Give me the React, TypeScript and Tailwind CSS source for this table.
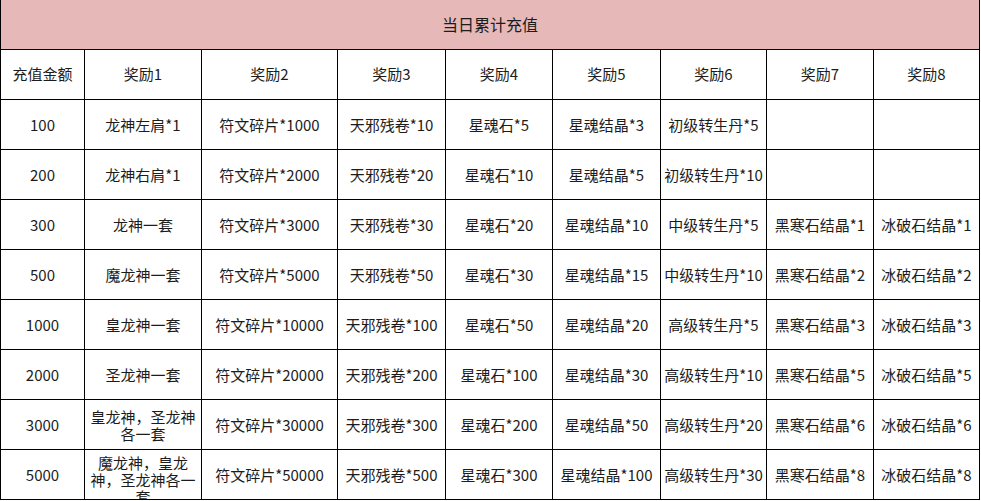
import React from "react";

const rows: (string | string[])[][] = [
  ["100", "龙神左肩*1", "符文碎片*1000", "天邪残卷*10", "星魂石*5", "星魂结晶*3", "初级转生丹*5", "", ""],
  ["200", "龙神右肩*1", "符文碎片*2000", "天邪残卷*20", "星魂石*10", "星魂结晶*5", "初级转生丹*10", "", ""],
  ["300", "龙神一套", "符文碎片*3000", "天邪残卷*30", "星魂石*20", "星魂结晶*10", "中级转生丹*5", "黑寒石结晶*1", "冰破石结晶*1"],
  ["500", "魔龙神一套", "符文碎片*5000", "天邪残卷*50", "星魂石*30", "星魂结晶*15", "中级转生丹*10", "黑寒石结晶*2", "冰破石结晶*2"],
  ["1000", "皇龙神一套", "符文碎片*10000", "天邪残卷*100", "星魂石*50", "星魂结晶*20", "高级转生丹*5", "黑寒石结晶*3", "冰破石结晶*3"],
  ["2000", "圣龙神一套", "符文碎片*20000", "天邪残卷*200", "星魂石*100", "星魂结晶*30", "高级转生丹*10", "黑寒石结晶*5", "冰破石结晶*5"],
  ["3000", ["皇龙神，圣龙神", "各一套"], "符文碎片*30000", "天邪残卷*300", "星魂石*200", "星魂结晶*50", "高级转生丹*20", "黑寒石结晶*6", "冰破石结晶*6"],
  ["5000", ["魔龙神，皇龙", "神，圣龙神各一", "套"], "符文碎片*50000", "天邪残卷*500", "星魂石*300", "星魂结晶*100", "高级转生丹*30", "黑寒石结晶*8", "冰破石结晶*8"],
];

const headers = ["充值金额", "奖励1", "奖励2", "奖励3", "奖励4", "奖励5", "奖励6", "奖励7", "奖励8"];

export default function App() {
  return (
    <div
      className="w-[981px] h-[501px] overflow-hidden bg-white text-[15px] text-[#1c1c1c]"
      style={{ fontFamily: '"Noto Sans CJK SC", "Noto Sans", sans-serif' }}
    >
      <div className="grid w-[980px] grid-cols-[83px_116px_135px_107px_106px_107px_105px_106px_105px] auto-rows-[49px] gap-px bg-black pl-px pr-px pb-px">
        <div className="col-span-9 flex items-center justify-center bg-[#e6b8b7] text-[16px] h-[50px] -mt-px">
          当日累计充值
        </div>
        {headers.map((h) => (
          <div key={h} className="flex items-center justify-center bg-white">
            {h}
          </div>
        ))}
        {rows.map((r, i) =>
          r.map((c, j) => (
            <div
              key={`${i}-${j}`}
              className="flex items-center justify-center overflow-hidden bg-white text-center whitespace-nowrap leading-[17px]"
            >
              {Array.isArray(c) ? (
                <div className={c.length > 2 ? "mt-[10px] flex flex-col" : "flex flex-col"}>
                  {c.map((line, k) => (
                    <span key={k}>{line}</span>
                  ))}
                </div>
              ) : (
                c
              )}
            </div>
          ))
        )}
      </div>
    </div>
  );
}
